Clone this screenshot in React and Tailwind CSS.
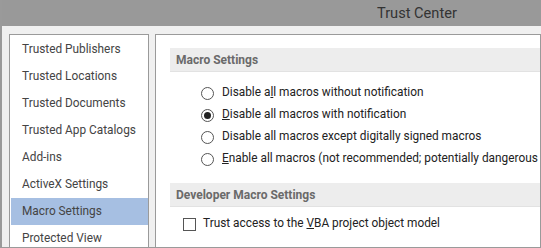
import React from "react";

const navItems = [
    "Trusted Publishers",
    "Trusted Locations",
    "Trusted Documents",
    "Trusted App Catalogs",
    "Add-ins",
    "ActiveX Settings",
    "Macro Settings",
    "Protected View",
];

const Radio = ({ checked, children }) => (
    <div className="flex items-center h-[22px] pl-[45px] whitespace-nowrap">
        <span className="w-[13px] h-[13px] shrink-0 rounded-full border border-[#555] bg-white flex items-center justify-center">
            {checked && <span className="w-[7px] h-[7px] rounded-full bg-[#222]" />}
        </span>
        <span className="ml-[8px] text-[#222]">{children}</span>
    </div>
);

const SectionHeader = ({ children }) => (
    <div className="ml-[14px] h-[24px] bg-[#ededed] border-b border-[#e2e2e2] pl-[6px] flex items-center font-bold text-[#6a6a6a] text-[12px]">
        {children}
    </div>
);

export default function App() {
    // Trust Center / Macro Settings page
    return (
        <div
            className="w-[541px] h-[248px] overflow-hidden bg-[#f0f0f0] border-l-2 border-b border-[#9a9a9a] flex flex-col text-[11.85px]"
            style={{ fontFamily: 'Roboto, sans-serif' }}
        >
            <div className="h-[26px] shrink-0 bg-[#999999] pl-[375px] text-[14.6px] leading-[26px] text-[#333]">
                Trust Center
            </div>
            <div className="flex flex-1 pt-[8px] pl-[7px] min-h-0">
                <div className="w-[140px] shrink-0 bg-white border border-b-0 border-[#9a9a9a] pt-[1px]">
                    {navItems.map((item) => (
                        <div
                            key={item}
                            className={`h-[27px] ml-[1px] pl-[11px] flex items-center text-[#444] whitespace-nowrap ${
                                item === "Macro Settings" ? "bg-[#a6bfe2]" : ""
                            }`}
                        >
                            {item}
                        </div>
                    ))}
                </div>
                <div className="ml-[6px] flex-1 min-w-0 bg-white border border-b-0 border-[#9a9a9a] overflow-hidden pt-[13px]">
                    <SectionHeader>Macro Settings</SectionHeader>
                    <div className="mt-[10px]">
                        <Radio>
                            Disable a<u>l</u>l macros without notification
                        </Radio>
                        <Radio checked>
                            <u>D</u>isable all macros with notification
                        </Radio>
                        <Radio>
                            Disable all macros except di<u>g</u>itally signed macros
                        </Radio>
                        <Radio>
                            <u>E</u>nable all macros (not recommended; potentially dangerous code can run)
                        </Radio>
                    </div>
                    <div className="mt-[13px]">
                        <SectionHeader>Developer Macro Settings</SectionHeader>
                    </div>
                    <div className="mt-[6px] flex items-center h-[22px] pl-[27px] whitespace-nowrap">
                        <span className="w-[13px] h-[13px] shrink-0 border border-[#555] bg-white" />
                        <span className="ml-[7px] text-[#222]">
                            Trust access to the <u>V</u>BA project object model
                        </span>
                    </div>
                </div>
            </div>
        </div>
    );
}
